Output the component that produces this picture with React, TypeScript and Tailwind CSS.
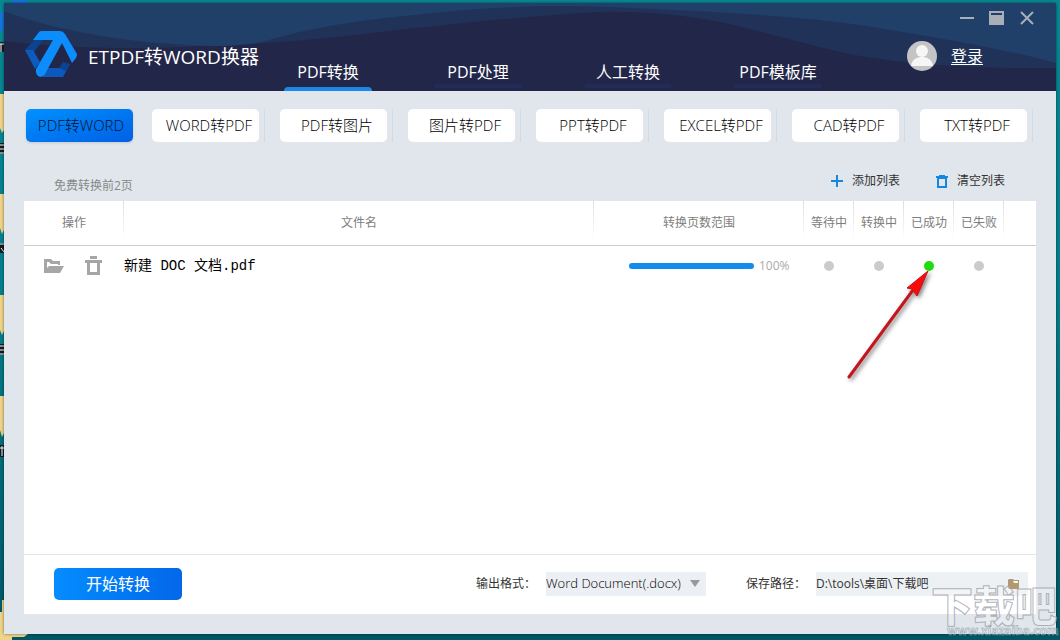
import React from "react";

const modes = ["PDF转WORD", "WORD转PDF", "PDF转图片", "图片转PDF", "PPT转PDF", "EXCEL转PDF", "CAD转PDF", "TXT转PDF"];
const sections = ["PDF转换", "PDF处理", "人工转换", "PDF模板库"];
const statuses = ["等待中", "转换中", "已成功", "已失败"];

function Waves() {
  return (
    <svg className="absolute inset-0 h-full w-full" viewBox="0 0 1052 88" preserveAspectRatio="none" aria-hidden="true">
      <path d="M0 0H1052V65C980 66 910 62 856 53C800 42 760 28 716 19C680 12 640 8 596 9C520 13 440 22 376 29C320 36 250 42 196 43C130 47 60 45 0 38Z" fill="#213259" />
      <path d="M0 8C40 24 110 38 170 41C200 44 235 44 262 38C300 26 350 18 400 13C450 7 500 3 560 3C620 4 700 8 756 12C800 15 830 18 856 22C930 34 1000 46 1052 60V0H0Z" fill="#203f69" />
    </svg>
  );
}

function Logo() {
  return (
    <svg width="52" height="47" viewBox="0 0 52 47" className="shrink-0" aria-hidden="true">
      <path d="M9 9H18L9 21L0 19Z" fill="#0b4390" />
      <path d="M0 19L8 19L15 31L10 38Z" fill="#0d5bbd" />
      <path d="M23 37H34L45 33L38 46H17Z" fill="#0c59bb" />
      <path d="M34 37L38 31L45 33L41 40Z" fill="#0b4390" />
      <path d="M14 1Q15 0 17 0H35Q38 0 40 3L52 23Q52 25 51 27L47 32L37 12L20 43Q18 46 15 46Q10 44 11 38L28 9H8Z" fill="#0c8dfb" />
    </svg>
  );
}

function Header() {
  return (
    <header className="relative flex h-[88px] bg-[#222649] text-white">
      <Waves />
      <div className="relative flex flex-1 items-start pl-[21px]">
        <div className="mt-7 flex w-[259px] items-start gap-[11px]">
          <Logo />
          <h1 className="whitespace-nowrap text-[19px] leading-[52px]">ETPDF转WORD换器</h1>
        </div>
        <nav className="flex h-full items-end gap-[62px]">
          {sections.map((s, i) => (
            <a key={s} href={`#section-${i}`} className="flex w-[88px] flex-col items-center whitespace-nowrap text-base leading-6">
              {s}
              <span className={i === 0 ? "mt-[3px] h-1 w-full rounded-t-sm bg-[#1c88e5]" : "mb-[3px] h-1 w-full rounded-sm bg-[#212c58]"} />
            </a>
          ))}
        </nav>
      </div>
      <div className="relative w-[153px]">
        <div className="flex h-[30px] items-center justify-end gap-[15px] pr-[22px] text-[#a9afb9]">
          <button aria-label="最小化"><svg width="15" height="15"><path d="M1 7H15" stroke="currentColor" strokeWidth="2" /></svg></button>
          <button aria-label="最大化"><svg width="15" height="15"><path d="M0 0H15V14H0ZM2 2V4H13V2Z" fill="currentColor" fillRule="evenodd" /></svg></button>
          <button aria-label="关闭"><svg width="15" height="15"><path d="M2 1L14 13M14 1L2 13" stroke="currentColor" strokeWidth="2" /></svg></button>
        </div>
        <a href="#login" className="mt-2 flex items-center gap-[14px] pl-1 text-base leading-[30px] underline underline-offset-2">
          <svg width="30" height="30" viewBox="0 0 30 30" aria-hidden="true">
            <circle cx="15" cy="15" r="15" fill="#c4c4c6" />
            <circle cx="15" cy="10" r="6" fill="#f6f6f6" />
            <path d="M4 25C5 18 10 16 15 16S25 18 26 25Z" fill="#f6f6f6" />
          </svg>
          登录
        </a>
      </div>
    </header>
  );
}

function Modes() {
  return (
    <div className="-mr-3 grid grid-cols-8 pt-[18px]">
      {modes.map((m, i) => (
        <div key={m} className={i === 0 ? "flex gap-[5px] pl-[2px] pr-[13px]" : "flex gap-[5px] pr-[15px]"}>
          <button
            className={
              i === 0
                ? "h-[33px] flex-1 whitespace-nowrap rounded-[5px] bg-gradient-to-br from-[#0391ff] to-[#025fe4] pl-[3px] text-[15px] font-light text-[#04102a] shadow-sm"
                : "h-[33px] flex-1 whitespace-nowrap rounded-[5px] bg-white pl-[7px] text-[15px] font-light text-black"
            }
          >
            {m}
          </button>
          <span className={i === 0 ? "w-px" : "w-px bg-[#d3dae1]"} />
        </div>
      ))}
    </div>
  );
}

function Rule() {
  return <span className="absolute right-0 top-0 h-10 w-px bg-gradient-to-b from-[#dddddd] to-white" />;
}

function Arrow() {
  return (
    <svg className="pointer-events-none absolute right-1 top-[10px] z-10 overflow-visible drop-shadow-[2px_2px_2px_rgba(0,0,0,0.500)]" width="84" height="108" viewBox="0 0 84 108" aria-hidden="true">
      <path d="M3 106L67 19" stroke="#c4161c" strokeWidth="3" strokeLinecap="round" />
      <path d="M82 0L61 17L66 18L71 25Z" fill="#f80b0b" stroke="#d01010" />
    </svg>
  );
}

function FileTable() {
  return (
    <table className="w-full table-fixed border-collapse text-xs text-[#7d7d7d]">
      <colgroup>
        <col className="w-[100px]" />
        <col />
        <col className="w-[210px]" />
        <col className="w-[50px]" />
        <col className="w-[50px]" />
        <col className="w-[50px]" />
        <col className="w-[50px]" />
        <col className="w-8" />
      </colgroup>
      <thead>
        <tr className="h-11 border-b border-[#cccccc]">
          {["操作", "文件名", "转换页数范围", ...statuses].map((h) => (
            <th key={h} className="relative whitespace-nowrap p-0 font-normal">{h}<Rule /></th>
          ))}
          <td />
        </tr>
      </thead>
      <tbody>
        <tr className="h-[41px]">
          <td className="p-0">
            <div className="flex items-center gap-[21px] pl-5 text-[#a6a6a6]">
              <button aria-label="打开文件夹">
                <svg width="20" height="16" viewBox="0 0 20 16"><path d="M0 1H7L9 3H16V7H14V6H7L5 4H3V10L5 8H20L16 15H0Z" fill="currentColor" /></svg>
              </button>
              <button aria-label="删除">
                <svg width="18" height="19" viewBox="0 0 18 19"><path d="M5 0H12V3H5ZM0 4H17V7H0ZM2 7H15V19H2ZM5 7V16H12V7Z" fill="currentColor" fillRule="evenodd" /></svg>
              </button>
            </div>
          </td>
          <td className="whitespace-pre p-0 font-['Liberation_Mono','Noto_Sans_CJK_SC',monospace] text-sm text-black">新建 DOC 文档.pdf</td>
          <td className="p-0">
            <div className="flex items-center gap-[5px] pl-[35px] text-[#aaaaaa]">
              <div role="progressbar" aria-label="转换进度" aria-valuenow={100} className="h-[6px] w-[125px] rounded-full bg-[#118bee]" />
              100%
            </div>
          </td>
          {statuses.map((s, i) => (
            <td key={s} className="p-0">
              <div className="relative mx-auto size-[10px]">
                <span className={i === 2 ? "block size-[10px] rounded-full bg-[#1fdc0e]" : "block size-[10px] rounded-full bg-[#cbcbcb]"} />
                {i === 2 && <Arrow />}
              </div>
            </td>
          ))}
          <td />
        </tr>
      </tbody>
    </table>
  );
}

function Footer() {
  return (
    <footer className="flex h-[60px] items-center border-t border-[#e2e4e6] pb-[2px] pl-[30px] pr-2 text-xs text-[#333333]">
      <button className="h-8 w-32 rounded-[5px] bg-gradient-to-r from-[#058dff] to-[#0467ea] text-base text-white">开始转换</button>
      <label htmlFor="format" className="ml-auto w-[70px] whitespace-nowrap">输出格式：</label>
      <div className="relative w-40">
        <select id="format" className="h-6 w-full appearance-none bg-[#eceff3] text-[13px] font-light text-black">
          <option>Word Document(.docx)</option>
        </select>
        <svg className="pointer-events-none absolute right-[6px] top-2" width="10" height="8" aria-hidden="true"><path d="M0 0H10L5 7Z" fill="#96999d" /></svg>
      </div>
      <label htmlFor="path" className="ml-10 w-[70px] whitespace-nowrap">保存路径：</label>
      <div className="flex h-6 w-[212px] items-center bg-[#eef1f4] pr-2">
        <input id="path" className="w-0 flex-1 bg-transparent text-xs" defaultValue="D:\tools\桌面\下载吧" />
        <button aria-label="选择路径">
          <svg width="12" height="12" viewBox="0 0 12 12"><path d="M1 1H5L6 2H11V11H1L0 10V2Z" fill="#b29871" /><path d="M5 3H10V5H6Z" fill="#faf5e8" /></svg>
        </button>
      </div>
    </footer>
  );
}

function Watermark() {
  return (
    <svg className="pointer-events-none absolute bottom-0 right-0" width="132" height="64" viewBox="0 0 132 64" aria-hidden="true">
      <g fontFamily="'Noto Sans CJK SC', sans-serif">
        <text x="3" y="46" fontSize="42" fontWeight="900" fill="#ffffff" fillOpacity="0.250" stroke="#9ca1a8" strokeOpacity="0.800" strokeWidth="1">下载吧</text>
        <text x="19" y="59" fontSize="12" fontWeight="700" fill="#ffffff" fillOpacity="0.200" stroke="#8fa0a8" strokeWidth="0.500">www.xiazaiba.com</text>
      </g>
    </svg>
  );
}

function Desktop() {
  return (
    <svg className="absolute inset-y-0 left-0 h-full w-[30px]" viewBox="0 0 30 640" preserveAspectRatio="none" aria-hidden="true">
      <path d="M12 0H28V3H12ZM0 14L4 10V30L0 32Z" fill="#1476dc" />
      <path d="M0 94H4V130L2 133L0 128ZM0 194H4V230L2 234L0 228ZM0 295H4V331L2 335L0 330ZM0 396H4V433L2 437L0 430ZM2 600H4V634H28L24 637H12V640H0V612H2Z" fill="#efd48a" />
      <path d="M0 42H4V52H0ZM0 143H4V154H0ZM0 243H4V253H0ZM0 344H4V355H0ZM0 445H4V457H0Z" fill="#101c22" />
      <path d="M0 44H4M1 44V52M0 145H4M0 149H4M0 153H4M0 244H4M1 248L4 252M0 346H4M0 350H4M0 354H4M0 448H4M2 446V456" stroke="#ffffff" fill="none" />
    </svg>
  );
}

export default function App() {
  return (
    <div className="relative flex min-h-screen flex-col bg-[linear-gradient(180deg,#078a94_0%,#04808c_45%,#005766_100%)] px-1 pb-[6px] pt-[3px] font-['Open_Sans','Noto_Sans_CJK_SC',sans-serif]">
      <Desktop />
      <div className="relative flex flex-1 flex-col bg-[#e0e6ec] shadow-[0_0_3px_rgba(0,0,0,0.500)]">
        <Header />
        <main className="flex flex-1 flex-col px-5 pb-5">
          <Modes />
          <div className="flex h-[59px] items-end pb-[7px] pl-[30px] pr-[31px] text-xs text-[#333333]">
            <span className="text-[#888888]">免费转换前2页</span>
            <button className="mb-[5px] ml-auto flex items-center gap-[9px]">
              <svg width="12" height="12" aria-hidden="true"><path d="M6 0V12M0 6H12" stroke="#1488e0" strokeWidth="2" /></svg>
              添加列表
            </button>
            <button className="mb-[5px] ml-9 flex items-center gap-[9px]">
              <svg width="12" height="13" aria-hidden="true"><path d="M3 0H9V1H12V3H11V13H1V3H0V1H3ZM3 4V11H9V4Z" fill="#1488e0" fillRule="evenodd" /></svg>
              清空列表
            </button>
          </div>
          <section className="flex flex-1 flex-col bg-white">
            <div className="flex-1"><FileTable /></div>
            <Footer />
          </section>
        </main>
      </div>
      <Watermark />
    </div>
  );
}
